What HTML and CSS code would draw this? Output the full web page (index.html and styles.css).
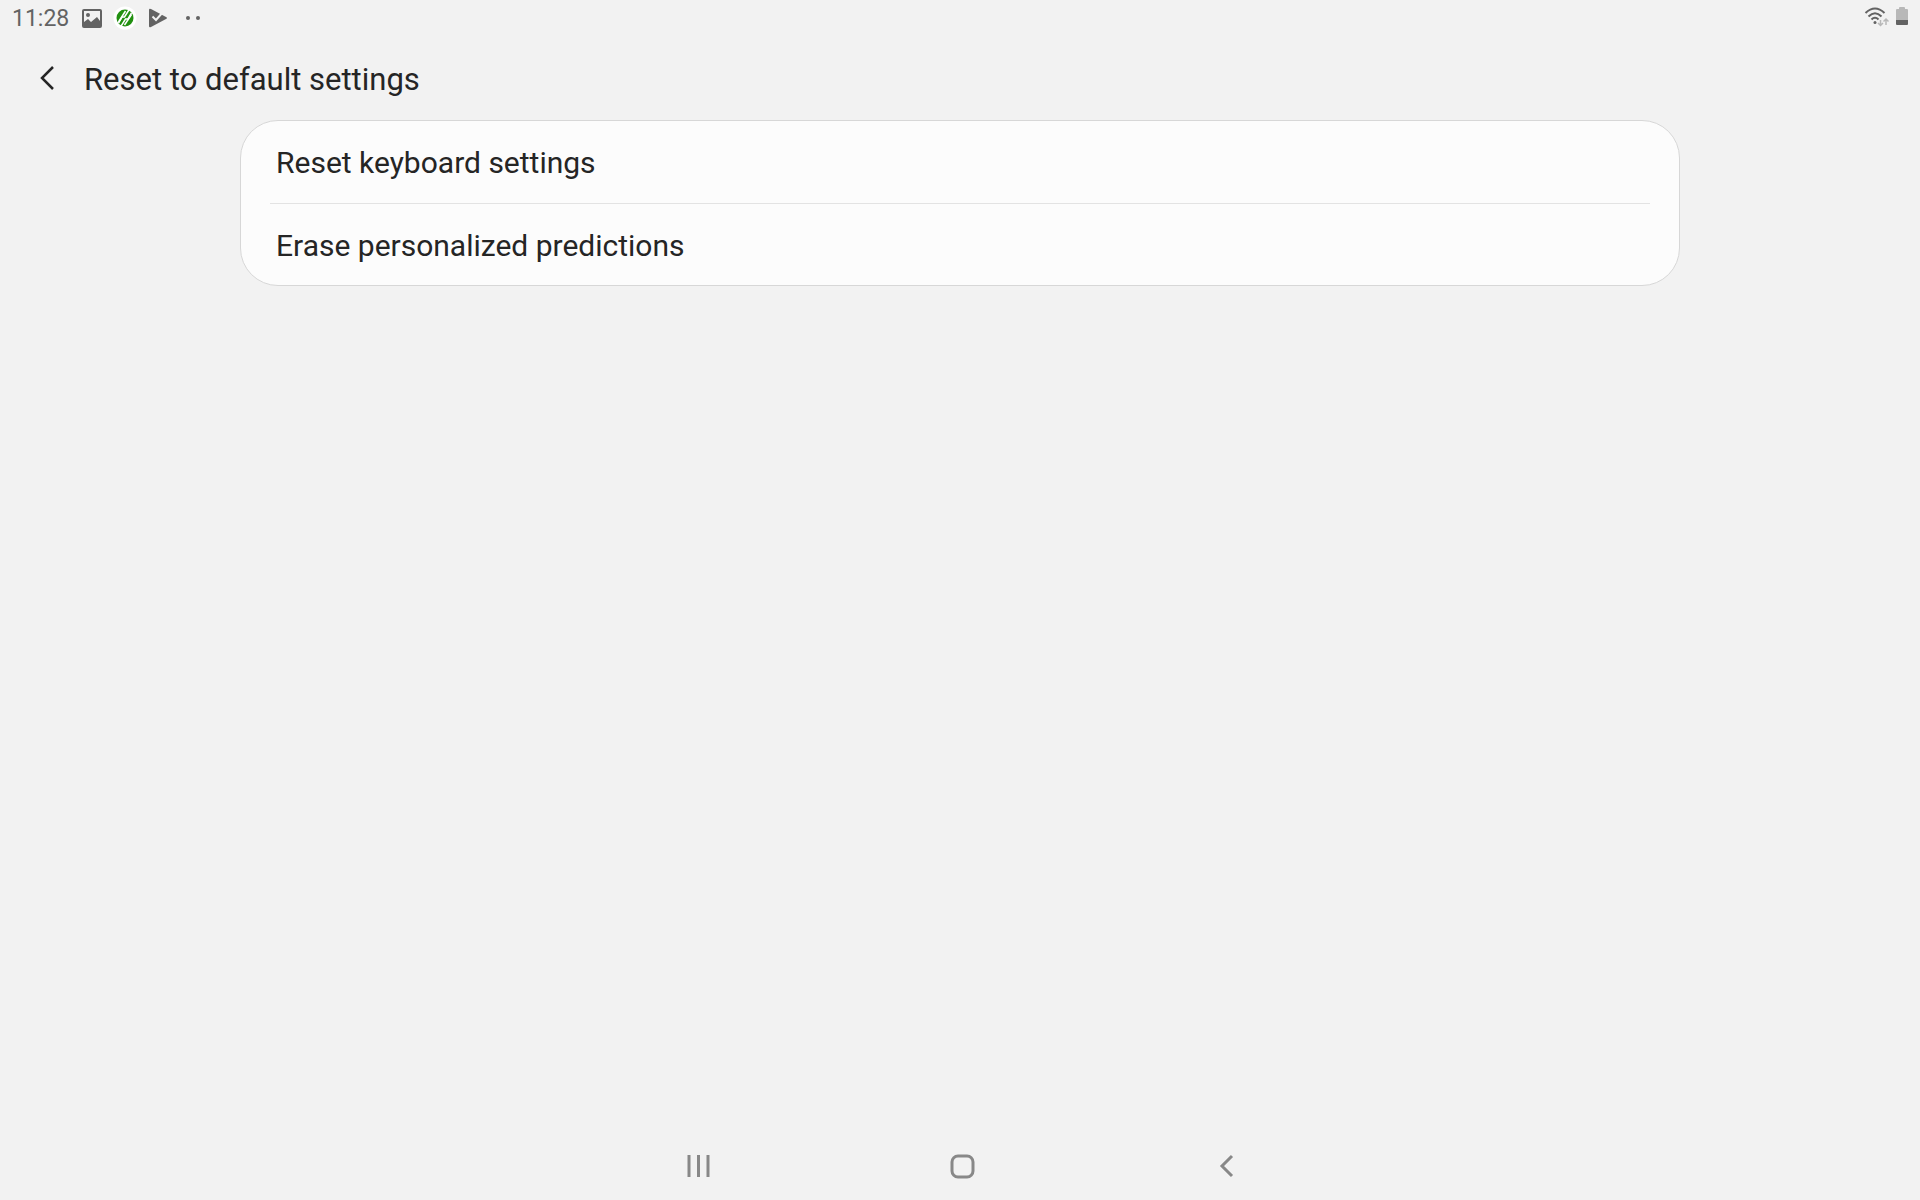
FILE: index.html
```
<!DOCTYPE html>
<html lang="en">
<head>
    <meta charset="UTF-8">
    <meta name="viewport" content="width=device-width, initial-scale=1.0">
    <title>Reset to default settings</title>
    <link rel="stylesheet" href="styles.css">
</head>
<body>
    <div class="status-bar">
        <div class="status-left">
            <span class="clock">11:28</span>
            <svg class="notif-icon" viewBox="0 0 24 24" aria-hidden="true">
                <path fill="#636363" fill-rule="evenodd" d="M4 3h16q2 0 2 2v15q0 2-2 2H4q-2 0-2-2V5q0-2 2-2zM4 5v11l4-3 3 3 6-5 3 4V5zM8 7a2 2 0 1 1 0 4 2 2 0 0 1 0-4z"/>
            </svg>
            <svg class="notif-icon" viewBox="0 0 24 24" aria-hidden="true">
                <circle cx="12" cy="12" r="11.500" fill="#fff"/>
                <circle cx="12" cy="12" r="8.500" fill="#219010"/>
                <g fill="none" stroke="#fff" stroke-width="1.500">
                    <path d="M12.500 5L5.500 16"/>
                    <path d="M16.500 3L11.500 11H9L5.500 17"/>
                    <path d="M18.500 7L15 13H12.500L7.500 21"/>
                    <path d="M18.500 8.500L11.500 19"/>
                </g>
            </svg>
            <svg class="notif-icon" viewBox="0 0 24 24" aria-hidden="true">
                <path fill="#636363" d="M3 4q0-2 2-1l15 8q2 1 0 2L5 21q-2 1-2-1z"/>
                <path fill="none" stroke="#f2f2f2" stroke-width="2" d="M6.500 10.500l3.500 3.500 7-8"/>
            </svg>
            <svg class="more-icon" viewBox="0 0 16 24" aria-hidden="true">
                <circle cx="3" cy="12" r="2" fill="#636363"/>
                <circle cx="13" cy="12" r="2" fill="#636363"/>
            </svg>
        </div>
        <div class="status-right">
            <svg class="wifi-icon" viewBox="0 0 26 24" aria-hidden="true">
                <g fill="none" stroke="#636363" stroke-width="2">
                    <path d="M1.500 8Q11 -1 20.500 8"/>
                    <path d="M4.500 11.500Q11 5 17.500 11.500"/>
                    <path d="M7.500 14.500Q11 11 14.500 14.500"/>
                </g>
                <circle cx="11" cy="17.500" r="1.500" fill="#636363"/>
                <g fill="none" stroke="#b8b8b8" stroke-width="1.500">
                    <path d="M16.500 15v5M14 18l2.500 2.500L19 18"/>
                    <path d="M22 20v-5.500M19.500 16.500l2.500-2.500 2.500 2.500"/>
                </g>
            </svg>
            <svg class="battery-icon" viewBox="0 0 12 24" aria-hidden="true">
                <path fill="#b8b8b8" d="M3 4V3Q3 2 4 2H8Q9 2 9 3V4H11Q12 4 12 5V15H0V5Q0 4 1 4z"/>
                <path fill="#636363" d="M0 15H12V19Q12 20 11 20H1Q0 20 0 19z"/>
            </svg>
        </div>
    </div>

    <header class="app-bar">
        <button class="back-btn" type="button" aria-label="Navigate up">
            <svg viewBox="0 0 24 24" aria-hidden="true">
                <path d="M17 1L6 12l11 11"/>
            </svg>
        </button>
        <h1>Reset to default settings</h1>
    </header>

    <main class="content">
        <ul class="settings-list">
            <li><button class="settings-item" type="button">Reset keyboard settings</button></li>
            <li><button class="settings-item" type="button">Erase personalized predictions</button></li>
        </ul>
    </main>

    <nav class="nav-bar">
        <button type="button" aria-label="Recents">
            <svg viewBox="0 0 28 28" aria-hidden="true">
                <path d="M5 3v22M14.500 3v22M24 3v22"/>
            </svg>
        </button>
        <button type="button" aria-label="Home">
            <svg viewBox="0 0 28 28" aria-hidden="true">
                <rect x="4" y="4" width="21" height="21" rx="6"/>
            </svg>
        </button>
        <button type="button" aria-label="Back">
            <svg viewBox="0 0 28 28" aria-hidden="true">
                <path d="M20 4L10 14l10 10"/>
            </svg>
        </button>
    </nav>
</body>
</html>
```
FILE: styles.css
```
* {
    box-sizing: border-box;
}
body {
    display: flex;
    flex-direction: column;
    min-height: 100vh;
    margin: 0;
    font-family: Roboto, sans-serif;
    background-color: #f2f2f2;
    color: #252525;
}
button {
    padding: 0;
    border: none;
    background: none;
    color: inherit;
    font-family: inherit;
    cursor: pointer;
}
svg {
    display: block;
}

/* status bar */
.status-bar {
    display: flex;
    justify-content: space-between;
    height: 36px;
    padding: 0 12px;
    color: #636363;
}
.status-left,
.status-right {
    display: flex;
    align-items: center;
}
.status-left {
    gap: 9px;
}
.status-right {
    gap: 6px;
    padding-bottom: 3px;
}
.clock {
    margin-right: 2px;
    padding-top: 2px;
    font-size: 23px;
    line-height: 36px;
}
.notif-icon {
    width: 24px;
    height: 24px;
}
.more-icon {
    width: 16px;
    height: 24px;
    margin-left: 6px;
}
.wifi-icon {
    width: 26px;
    height: 24px;
}
.battery-icon {
    width: 12px;
    height: 24px;
}

/* title */
.app-bar {
    display: flex;
    align-items: center;
    height: 84px;
    padding-left: 24px;
}
.back-btn {
    display: flex;
    align-items: center;
    justify-content: center;
    width: 48px;
    height: 48px;
}
.back-btn svg {
    width: 24px;
    height: 24px;
    fill: none;
    stroke: #252525;
    stroke-width: 2.500;
}
.app-bar h1 {
    margin: 0 0 0 12px;
    padding-top: 3px;
    font-size: 31px;
    font-weight: 400;
    line-height: 40px;
}

/* list */
.content {
    flex: 1;
    padding: 0 12.5%;
}
.settings-list {
    margin: 0;
    padding: 0 29px;
    list-style: none;
    background-color: #fcfcfc;
    border: 1px solid #d7d7d7;
    border-radius: 38px;
}
.settings-list li + li {
    border-top: 1px solid #e3e3e3;
}
.settings-item {
    display: block;
    width: 100%;
    padding: 22px 6px 19px;
    font-size: 30px;
    line-height: 40px;
    text-align: left;
}
.settings-list li:first-child .settings-item {
    padding-bottom: 20px;
}

/* bottom navigation */
.nav-bar {
    display: flex;
    justify-content: center;
    height: 68px;
    padding-left: 4px;
}
.nav-bar button {
    display: flex;
    align-items: center;
    justify-content: center;
    width: 264px;
}
.nav-bar svg {
    width: 28px;
    height: 28px;
    fill: none;
    stroke: #888;
    stroke-width: 3;
}
```
